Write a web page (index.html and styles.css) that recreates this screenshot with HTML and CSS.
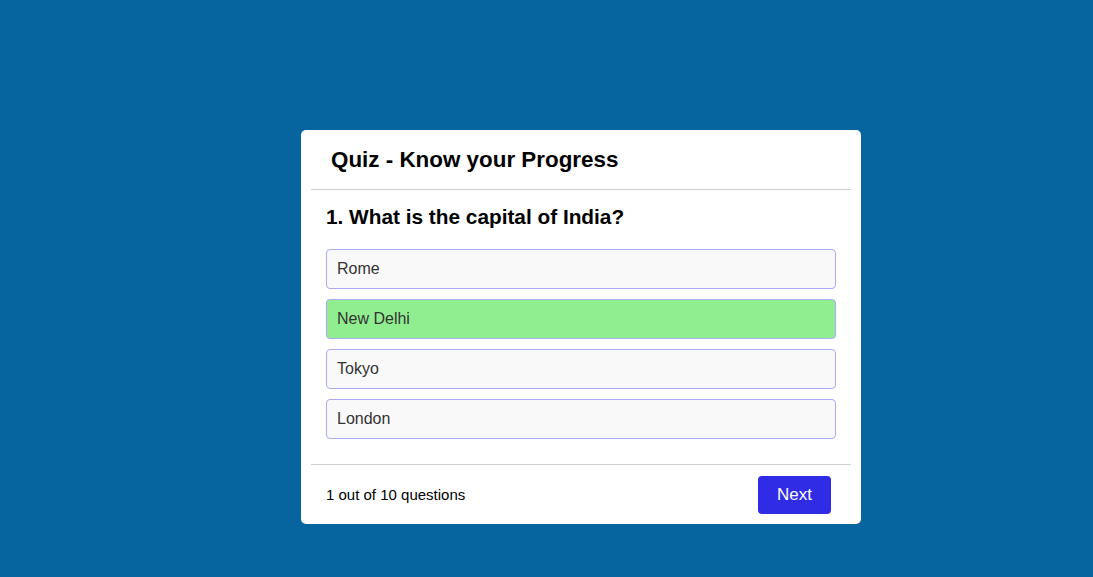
FILE: index.html
```html
<!DOCTYPE html>
<html>
<head>
<meta charset="utf-8">
<link rel="stylesheet" href="styles.css">
</head>
<body>
<div class="card">
  <div class="card-header"><h1 class="title">Quiz - Know your Progress</h1></div>
  <hr class="rule">
  <div class="card-body">
    <h2 class="question">1. What is the capital of India?</h2>
    <ul class="options">
      <li class="option">Rome</li>
      <li class="option correct">New Delhi</li>
      <li class="option">Tokyo</li>
      <li class="option">London</li>
    </ul>
  </div>
  <hr class="rule">
  <div class="card-footer">
    <span class="count">1 out of 10 questions</span>
    <button class="next">Next</button>
  </div>
</div>
</body>
</html>
```
FILE: styles.css
```css
html, body {
  margin: 0;
  padding: 0;
}
body {
  background: #06659e;
  font-family: "Liberation Sans", Arial, sans-serif;
  min-height: 577px;
  padding: 130px 0 0 301px;
  box-sizing: border-box;
}
.card {
  width: 560px;
  box-sizing: border-box;
  background: #fff;
  border-radius: 5px;
  padding: 10px;
}
.card-header {
  height: 49px;
  box-sizing: border-box;
  display: flex;
  align-items: center;
  padding: 0 20px 10px;
}
.title {
  margin: 0;
  font-size: 22.4px;
  font-weight: bold;
  color: #000;
  line-height: 26px;
}
.rule {
  margin: 0;
  border: 0;
  height: 1px;
  background: #d0d0d0;
}
.card-body {
  padding: 15px 15px 25px;
}
.question {
  margin: 0 0 20px;
  font-size: 20.8px;
  line-height: 24px;
  font-weight: bold;
  color: #000;
}
.options {
  list-style: none;
  margin: 0;
  padding: 0;
  display: flex;
  flex-direction: column;
  gap: 10px;
}
.option {
  height: 40px;
  box-sizing: border-box;
  border: 1px solid #aaaaf5;
  border-radius: 4px;
  background: #f9f9f9;
  padding: 0 10px;
  display: flex;
  align-items: center;
  font-size: 16px;
  color: #333;
}
.option.correct {
  background: #90ee90;
}
.card-footer {
  display: flex;
  align-items: center;
  justify-content: space-between;
  padding: 11px 20px 0 15px;
}
.count {
  font-size: 15px;
  line-height: 17px;
  color: #000;
  margin-top: -2px;
}
.next {
  width: 73px;
  height: 38px;
  border: 0;
  border-radius: 4px;
  background: #302ce6;
  color: #fff;
  font-family: "Liberation Sans", Arial, sans-serif;
  font-size: 17px;
  padding: 0;
}
```
